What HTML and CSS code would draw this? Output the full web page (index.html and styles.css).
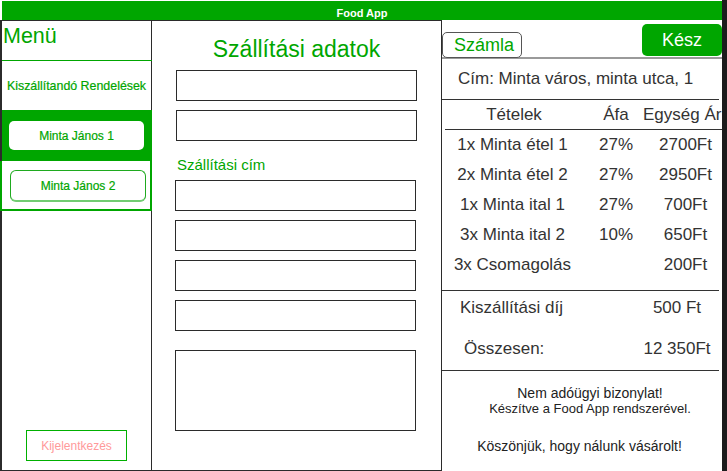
FILE: index.html
```html
<!DOCTYPE html>
<html lang="hu">
<head>
<meta charset="utf-8">
<title>Food App</title>
<link rel="stylesheet" href="styles.css">
</head>
<body>
<div class="app">
  <div class="main">
    <header class="topbar">Food App</header>
    <div class="content">
      <aside class="sidebar">
        <div class="menu-title">Menü</div>
        <div class="menu-section">Kiszállítandó Rendelések</div>
        <div class="order order-active"><div class="order-btn">Minta János 1</div></div>
        <div class="order order-idle"><div class="order-btn">Minta János 2</div></div>
        <div class="spacer"></div>
        <div class="logout">Kijelentkezés</div>
      </aside>
      <section class="form">
        <h1 class="form-title">Szállítási adatok</h1>
        <input class="field field-top" type="text">
        <input class="field field-top gap" type="text">
        <div class="form-label">Szállítási cím</div>
        <input class="field field-addr first" type="text">
        <input class="field field-addr gap" type="text">
        <input class="field field-addr gap" type="text">
        <input class="field field-addr gap" type="text">
        <textarea class="field field-note"></textarea>
      </section>
      <section class="receipt">
        <div class="receipt-top">
          <div class="tab-btn">Számla</div>
          <div class="done-btn">Kész</div>
        </div>
        <div class="address">Cím: Minta város, minta utca, 1</div>
        <div class="items">
          <div class="row head"><span>Tételek</span><span>Áfa</span><span class="price-head">Egység Ár</span></div>
          <div class="row"><span>1x Minta étel 1</span><span>27%</span><span>2700Ft</span></div>
          <div class="row"><span>2x Minta étel 2</span><span>27%</span><span>2950Ft</span></div>
          <div class="row"><span>1x Minta ital 1</span><span>27%</span><span>700Ft</span></div>
          <div class="row"><span>3x Minta ital 2</span><span>10%</span><span>650Ft</span></div>
          <div class="row"><span>3x Csomagolás</span><span></span><span>200Ft</span></div>
        </div>
        <div class="totals">
          <div class="total-row"><span class="lbl">Kiszállítási díj</span><span class="val">500 Ft</span></div>
          <div class="total-row"><span class="lbl lbl-sum">Összesen:</span><span class="val">12 350Ft</span></div>
        </div>
        <div class="footer">
          <div class="note">Nem adóügyi bizonylat!</div>
          <div class="made">Készítve a Food App rendszerével.</div>
          <div class="thanks">Köszönjük, hogy nálunk vásárolt!</div>
        </div>
      </section>
    </div>
  </div>
  <div class="edge"></div>
</div>
</body>
</html>
```
FILE: styles.css
```css
html, body {
  margin: 0;
  padding: 0;
  background: #ffffff;
}
body {
  font-family: "Liberation Sans", Arial, sans-serif;
  color: #333333;
}
.app {
  display: flex;
  width: 727px;
  height: 471px;
  overflow: hidden;
}
.main {
  width: 722px;
  display: flex;
  flex-direction: column;
}
.edge {
  width: 5px;
  background: #1c1c1c;
}
.topbar {
  margin: 1px 0 0 2px;
  width: 720px;
  height: 19px;
  box-sizing: border-box;
  padding-top: 5px;
  line-height: 14px;
  background: #00a600;
  color: #ffffff;
  font-weight: bold;
  font-size: 11px;
  text-align: center;
}
.content {
  flex: 1;
  display: flex;
  min-height: 0;
}

/* Sidebar */
.sidebar {
  width: 152px;
  box-sizing: border-box;
  border: 1px solid #2b2b2b;
  border-left-width: 2px;
  display: flex;
  flex-direction: column;
}
.menu-title {
  height: 40px;
  box-sizing: border-box;
  margin-right: -1px;
  padding: 3px 0 0 1px;
  border-bottom: 1px solid #00a600;
  font-size: 21.5px;
  line-height: 24px;
  color: #00a600;
}
.menu-section {
  height: 49px;
  display: flex;
  align-items: center;
  justify-content: center;
  font-size: 12.4px;
  color: #00a600;
  white-space: nowrap;
  -webkit-text-stroke: 0.2px #00a600;
}
.order {
  box-sizing: border-box;
  margin-right: -1px;
}
.order-active {
  height: 51px;
  background: #00a600;
  padding: 11px 0 0 7px;
}
.order-idle {
  height: 50px;
  margin-left: -2px;
  border: 2px solid #00a600;
  border-top: none;
  padding: 9px 0 0 8px;
}
.order-btn {
  box-sizing: border-box;
  background: #ffffff;
  color: #00a600;
  font-size: 12px;
  -webkit-text-stroke: 0.2px #00a600;
  display: flex;
  align-items: center;
  justify-content: center;
}
.order-active .order-btn {
  width: 135px;
  height: 29px;
  border-radius: 5px;
}
.order-idle .order-btn {
  width: 136px;
  height: 32px;
  border-radius: 6px;
  border: 1px solid #1faa1f;
  border-bottom: 2px solid #72cc72;
}
.spacer {
  flex: 1;
}
.logout {
  width: 101px;
  height: 31px;
  box-sizing: border-box;
  margin: 0 0 9px 24px;
  border: 1px solid #00b000;
  color: #ff9a9a;
  font-size: 12px;
  display: flex;
  align-items: center;
  justify-content: center;
}

/* Form */
.form {
  width: 290px;
  box-sizing: border-box;
  border: 1px solid #2b2b2b;
  border-left: none;
  padding-top: 14px;
}
.form-title {
  margin: 0;
  font-weight: normal;
  font-size: 23px;
  line-height: 28px;
  text-align: center;
  color: #00a600;
}
.field {
  display: block;
  box-sizing: border-box;
  width: 241px;
  height: 31px;
  margin: 0;
  padding: 0;
  border: 1px solid #2b2b2b;
  border-radius: 0;
  background: #ffffff;
  outline: none;
  resize: none;
  font: inherit;
}
.field-top {
  margin: 7px 0 0 24px;
}
.field-addr {
  margin-left: 23px;
}
.field.gap {
  margin-top: 9px;
}
.field.first {
  margin-top: 6px;
}
.field-note {
  margin: 19px 0 0 23px;
  height: 81px;
}
.form-label {
  margin: 15px 0 0 25px;
  font-size: 15px;
  line-height: 18px;
  color: #00a600;
}

/* Receipt */
.receipt {
  flex: 1;
  min-width: 0;
  overflow: hidden;
  display: flex;
  flex-direction: column;
  font-size: 17px;
  color: #333333;
}
.receipt-top {
  height: 37px;
  border-bottom: 2px solid #9a9a9a;
  display: flex;
  align-items: flex-start;
}
.tab-btn {
  width: 80px;
  height: 26px;
  box-sizing: border-box;
  margin-top: 12px;
  padding-left: 11px;
  border: 1px solid #555555;
  border-radius: 5px;
  background: #ffffff;
  color: #00a600;
  font-size: 18px;
  display: flex;
  align-items: center;
}
.done-btn {
  width: 80px;
  height: 32px;
  margin: 4px 0 0 auto;
  border-radius: 5px;
  background: #00a600;
  color: #ffffff;
  font-size: 18px;
  display: flex;
  align-items: center;
  justify-content: center;
}
.address {
  height: 40px;
  margin-right: 3px;
  padding-left: 16px;
  border-bottom: 1px solid #333333;
  display: flex;
  align-items: center;
  white-space: nowrap;
}
.row {
  display: grid;
  grid-template-columns: 141px 66px 1fr;
  height: 30px;
  align-items: center;
  text-align: center;
  white-space: nowrap;
}
.row.head {
  height: 29px;
  margin-left: 3px;
  grid-template-columns: 138px 66px 1fr;
  border-bottom: 1px solid #333333;
}
.price-head {
  display: flex;
  justify-content: flex-start;
  margin-left: -6px;
}
.totals {
  margin: 10px 3px 0 0;
  padding: 1px 0 5px;
  border-top: 1px solid #333333;
  border-bottom: 1px solid #333333;
  display: flex;
  flex-direction: column;
  gap: 9px;
}
.total-row {
  height: 32px;
  display: grid;
  grid-template-columns: 1fr 84px;
  align-items: center;
  white-space: nowrap;
}
.lbl {
  padding-left: 18px;
}
.lbl-sum {
  padding-left: 22px;
}
.val {
  text-align: center;
}
.footer {
  padding-top: 14px;
  color: #222222;
  text-align: center;
  white-space: nowrap;
}
.note {
  padding-left: 16px;
  font-size: 14px;
  line-height: 16px;
}
.made {
  padding-left: 16px;
  font-size: 13px;
  line-height: 15px;
}
.thanks {
  margin-top: 22px;
  padding-right: 5px;
  font-size: 14px;
  line-height: 16px;
}
```
